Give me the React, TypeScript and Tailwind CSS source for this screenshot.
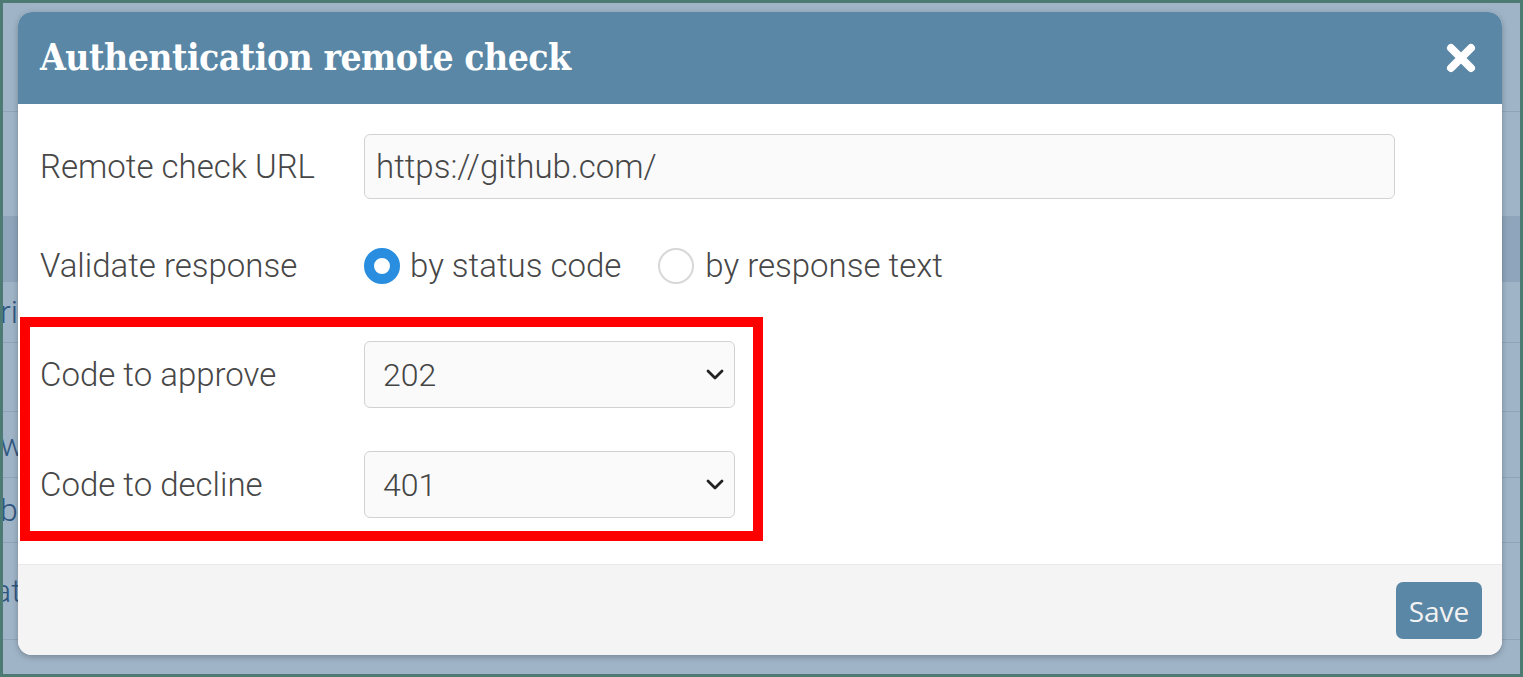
import React, { useState } from "react";

// ---- background table rows behind the dialog ----//
const bgRows = [
  { h: "h-[109px]", text: "", shift: "-ml-[3px]", dark: false },
  { h: "h-[105px]", text: "", shift: "-ml-[3px]", dark: false },
  { h: "h-[65px]", text: "", shift: "-ml-[3px]", dark: true },
  { h: "h-[61px]", text: "ri", shift: "-ml-[3px]", dark: false },
  { h: "h-[69px]", text: "", shift: "-ml-[3px]", dark: false },
  { h: "h-[66px]", text: "w", shift: "-ml-[3px]", dark: false },
  { h: "h-[65px]", text: "b", shift: "-ml-[3px]", dark: false },
  { h: "h-[97px]", text: "at", shift: "-ml-[9px]", dark: false },
];

const Chevron = () => (
  <svg width="18" height="11" viewBox="0 0 18 11" fill="none">
    <path d="M2 2l7 7 7-7" stroke="#222" strokeWidth="2.8" strokeLinecap="round" strokeLinejoin="round" />
  </svg>
);

const CloseIcon = () => (
  <svg width="32" height="30" viewBox="0 0 32 30" fill="none">
    <path d="M6 5l20 20M26 5L6 25" stroke="#fff" strokeWidth="8" strokeLinecap="round" />
  </svg>
);

const SelectBox = ({ value }: { value: string }) => (
  <div className="flex h-[67px] w-[371px] items-center justify-between rounded-[6px] border border-[#d2d2d2] bg-[#fafafa] pl-[18px] pr-[10px] text-[32px] font-light text-[#444]">
    <span>{value}</span>
    <Chevron />
  </div>
);

export default function App() {
  const [mode, setMode] = useState<"status" | "text">("status");

  return (
    <div className="relative h-[677px] w-[1523px] overflow-hidden border-[3px] border-[#4d7b74] bg-[#9fb4c7] font-['Roboto',sans-serif]">
      {/* page behind the modal */}
      <div className="flex flex-col">
        {bgRows.map((r, i) => (
          <div
            key={i}
            className={`flex items-center border-b border-[#8ea4b9] ${r.h} ${r.dark ? "bg-[#8ea5bb]" : ""}`}
          >
            <span className={`${r.shift} text-[32px] font-light text-[#2f5680]`}>{r.text}</span>
          </div>
        ))}
      </div>

      {/* ---- Dialog ---- */}
      <div className="absolute left-[15px] top-[9px] flex h-[643px] w-[1484px] flex-col overflow-hidden rounded-[14px] bg-white shadow-[0_2px_6px_rgba(0,0,0,0.25)]">
        <div className="flex h-[92px] items-center justify-between bg-[#5a87a6] pl-[22px] pr-[25px]">
          <h1 className="font-['DejaVu_Serif',serif] text-[37px] font-semibold font-stretch-condensed tracking-[-0.5px] text-white">
            Authentication remote check
          </h1>
          <CloseIcon />
        </div>

        <div className="relative flex-1 pl-[22px] pt-[30px] text-[33px] font-light text-[#474747]">
          <div className="flex h-[65px] items-center">
            <label className="w-[324px]">Remote check URL</label>
            <div className="flex h-[65px] w-[1031px] items-center rounded-[6px] border border-[#d2d2d2] bg-[#fafafa] px-[11px]">
              https://github.com/
            </div>
          </div>

          <div className="mt-[47px] flex h-[40px] items-center">
            <label className="w-[324px]">Validate response</label>
            <button className="flex items-center" onClick={() => setMode("status")}>
              <span
                className={`h-[36px] w-[36px] rounded-full ${
                  mode === "status" ? "border-[10px] border-[#2a8ee0] bg-white" : "border-2 border-[#d8d8d8] bg-white"
                }`}
              />
              <span className="ml-[10px]">by status code</span>
            </button>
            <button className="ml-[37px] flex items-center" onClick={() => setMode("text")}>
              <span
                className={`h-[36px] w-[36px] rounded-full ${
                  mode === "text" ? "border-[10px] border-[#2a8ee0] bg-white" : "border-2 border-[#d8d8d8] bg-white"
                }`}
              />
              <span className="ml-[11px]">by response text</span>
            </button>
          </div>

          <div className="mt-[55px] flex h-[67px] items-center">
            <label className="w-[324px]">Code to approve</label>
            <SelectBox value="202" />
          </div>

          <div className="mt-[43px] flex h-[67px] items-center">
            <label className="w-[324px]">Code to decline</label>
            <SelectBox value="401" />
          </div>

          {/* annotation frame */}
          <div className="pointer-events-none absolute left-[2px] top-[213px] h-[224px] w-[743px] border-[10px] border-[#ff0000]" />
        </div>

        <div className="flex h-[91px] justify-end border-t border-[#e9e9e9] bg-[#f4f4f4] pr-[20px] pt-[17px]">
          <button className="h-[57px] w-[86px] rounded-[7px] bg-[#5a87a6] font-['Open_Sans',sans-serif] text-[28px] text-[#f2f2f2]">
            Save
          </button>
        </div>
      </div>
    </div>
  );
}
